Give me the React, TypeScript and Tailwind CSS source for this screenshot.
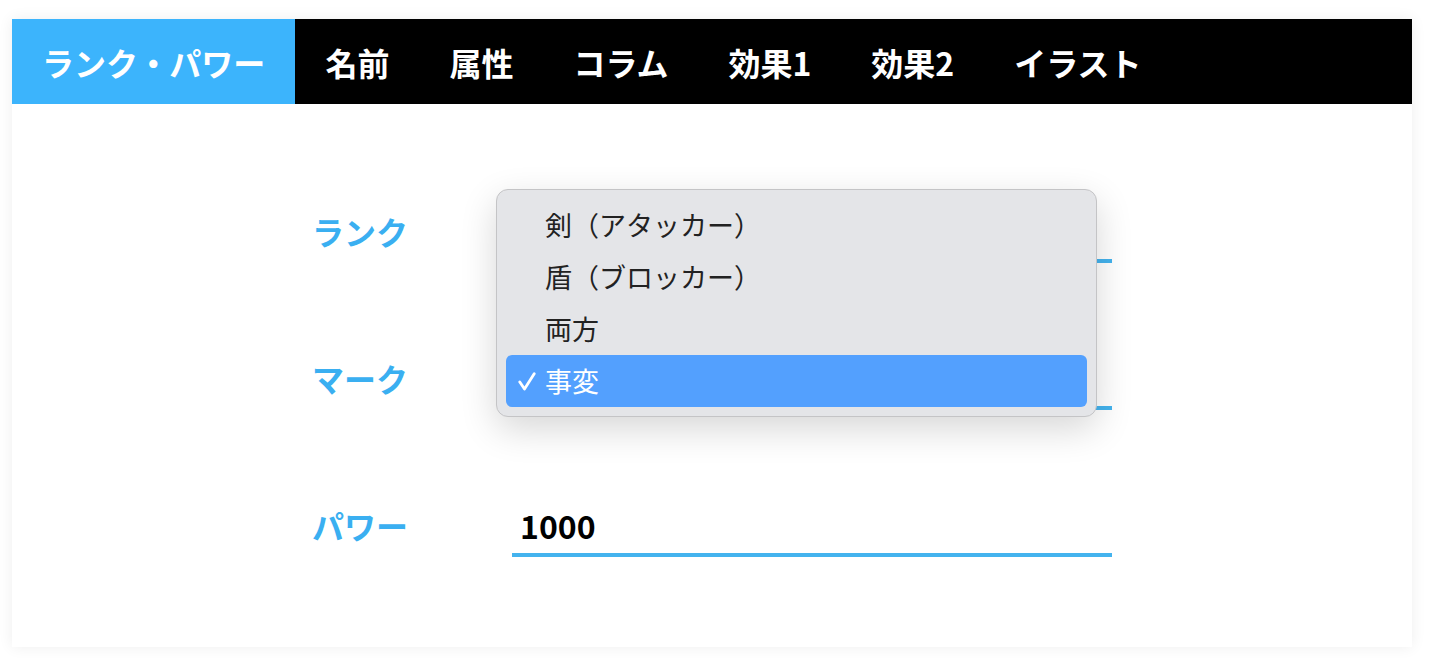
import { useState } from "react";

const TABS = ["ランク・パワー", "名前", "属性", "コラム", "効果1", "効果2", "イラスト"];
const MARKS = ["剣（アタッカー）", "盾（ブロッカー）", "両方", "事変"];

const jp = { fontFamily: '"Noto Sans CJK JP", "Noto Sans", sans-serif' };

function Field({ children }: { children?: React.ReactNode }) {
  return (
    <div className="relative flex h-[56px] w-[600px] items-center border-b-4 border-[#44b3ee] pb-1 pl-2 text-[32px] font-bold text-black">
      {children}
    </div>
  );
}

// open native-looking popup of the mark select; the selected row sits over the field
function MarkPopup({ selected }: { selected: string }) {
  return (
    <div className="absolute -left-4 top-[-165px] z-10 w-[601px] rounded-xl border border-[#c4c4c6] bg-[#e4e5e8] px-[9px] py-[9px] shadow-[0_12px_36px_rgba(0,0,0,0.16)]">
      {MARKS.map((m) => {
        const active = m === selected;
        return (
          <div
            key={m}
            className={`flex h-[52px] items-center rounded-md text-[27px] font-normal ${active ? "bg-[#53a0fe] text-white" : "text-[#222]"}`}
          >
            <span className="flex w-[39px] justify-center pl-[2px]">
              {active ? (
                <svg width="18" height="19" viewBox="0 0 18 19" fill="none">
                  <path
                    d="M1.8 10 L6.5 17 L16.2 1.8"
                    stroke="white"
                    strokeWidth="2.8"
                    strokeLinecap="round"
                    strokeLinejoin="round"
                  />
                </svg>
              ) : null}
            </span>
            <span>{m}</span>
          </div>
        );
      })}
    </div>
  );
}

export default function App() {
  const [tab] = useState(0);
  const mark = "事変";

  return (
    <div className="min-h-screen bg-white pt-[19px]" style={jp}>
      <div className="ml-[12px] w-[1400px] bg-white shadow-[0_0_14px_rgba(0,0,0,0.07)]">
        <nav className="flex h-[85px] bg-black">
          {TABS.map((t, i) => (
            <div
              key={t}
              className={`flex h-full items-center px-[30px] text-[32px] font-bold text-white ${i === tab ? "bg-[#3cb4fc]" : ""}`}
            >
              {t}
            </div>
          ))}
        </nav>
        <main className="mx-auto flex w-[800px] flex-col gap-[91px] pt-[103px] pb-[90px]">
          <div className="flex items-center">
            <label className="w-[200px] pb-2 text-[32px] font-bold text-[#3aaff1]">ランク</label>
            <Field />
          </div>
          <div className="flex items-center">
            <label className="w-[200px] pb-2 text-[32px] font-bold text-[#3aaff1]">マーク</label>
            <Field>
              <MarkPopup selected={mark} />
            </Field>
          </div>
          <div className="flex items-center">
            <label className="w-[200px] pb-2 text-[32px] font-bold text-[#3aaff1]">パワー</label>
            <Field>1000</Field>
          </div>
        </main>
      </div>
    </div>
  );
}
